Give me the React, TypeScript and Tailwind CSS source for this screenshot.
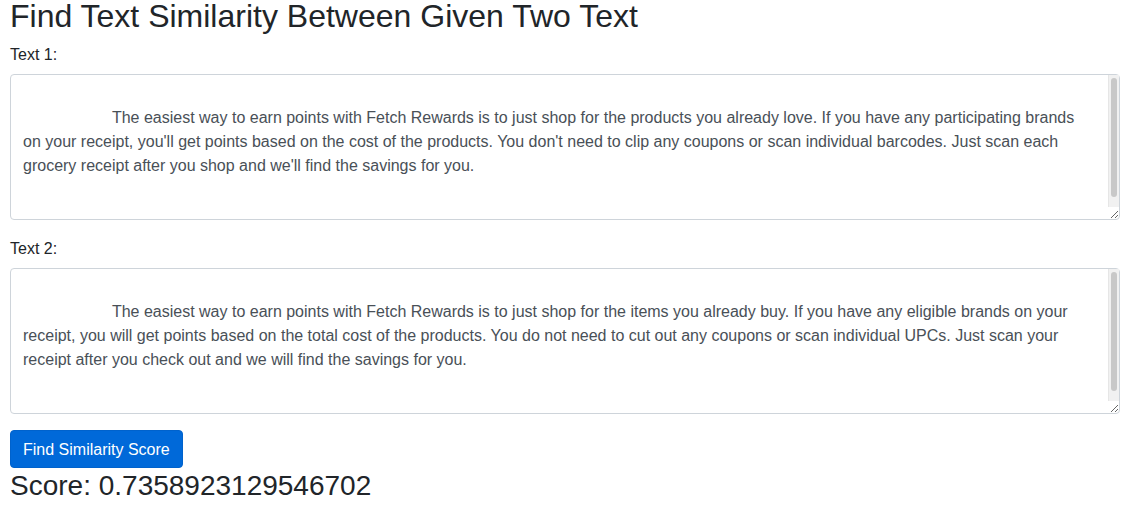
const text1 =
  "\n                    The easiest way to earn points with Fetch Rewards is to just shop for the products you already love. If you have any participating brands on your receipt, you'll get points based on the cost of the products. You don't need to clip any coupons or scan individual barcodes. Just scan each grocery receipt after you shop and we'll find the savings for you.\n\n                ";

const text2 =
  "\n                    The easiest way to earn points with Fetch Rewards is to just shop for the items you already buy. If you have any eligible brands on your receipt, you will get points based on the total cost of the products. You do not need to cut out any coupons or scan individual UPCs. Just scan your receipt after you check out and we will find the savings for you.\n\n                ";

// textarea with a drawn scrollbar over its right edge
const TextBox = ({ label, value }: { label: string; value: string }) => (
  <div className="mb-4 w-[1110px]">
    <label className="block text-base leading-6 pt-px mb-[7px]">{label}</label>
    <div className="relative">
      <textarea
        className="block w-full h-[146px] pl-3 pr-[25px] pt-[7px] pb-[5px] text-base leading-6 text-[#495057] bg-white border border-[#ced4da] rounded-[4px] overflow-hidden outline-none"
        defaultValue={value}
      />
      {/* Scrollbar */}
      <div className="absolute top-px right-px bottom-[13px] w-[11px] bg-[#f1f1f1] border-l border-[#e6e6e6]">
        <div className="absolute top-[3px] left-[2px] right-[2px] h-[119px] rounded-full bg-[#c8c8c8]" />
      </div>
    </div>
  </div>
);

const App = () => {
  return (
    <div className="px-[10px] font-['Liberation_Sans',Arial,sans-serif] text-[#212529] bg-white min-h-screen">
      {/* Title */}
      <h1 className="text-[32px] leading-[32px] mb-[10px] font-normal">
        Find Text Similarity Between Given Two Text
      </h1>

      <TextBox label="Text 1:" value={text1} />
      <TextBox label="Text 2:" value={text2} />

      {/* Button */}
      <button className="block h-[38px] px-3 pt-px text-base leading-6 text-white bg-[#0069d9] border border-[#0062cc] rounded-[4px]">
        Find Similarity Score
      </button>

      {/* Result */}
      <h3 className="text-[28px] leading-[33.6px] pt-px font-normal">
        Score: 0.7358923129546702
      </h3>
    </div>
  );
};

export default App;
